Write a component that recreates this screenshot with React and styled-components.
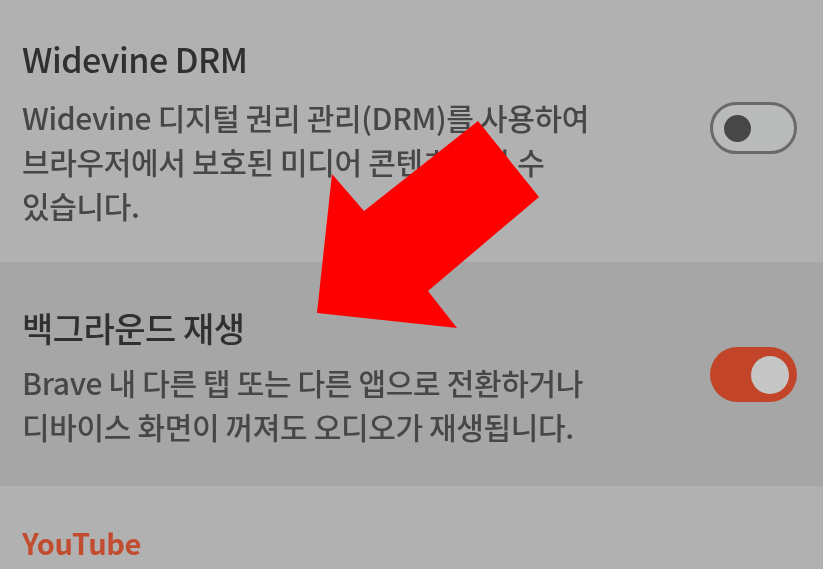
import React from "react";
import styled, { createGlobalStyle } from "styled-components";

const Global = createGlobalStyle`
  html, body { margin: 0; padding: 0; background: #b2b1b2; }
  body { font-family: "Noto Sans CJK KR", "Noto Sans", sans-serif; }
  * { box-sizing: border-box; }
`;

const Screen = styled.div`
  position: relative;
  width: 823px;
  height: 569px;
  overflow: hidden;
  background: #b2b1b2;
  filter: blur(0.6px);
`;

const SettingRow = styled.div`
  display: flex;
  align-items: flex-start;
  justify-content: space-between;
  height: ${(p) => p.$height}px;
  padding: ${(p) => p.$padTop}px 26px 0 22px;
  background: ${(p) => (p.$highlight ? "#a6a6a6" : "#b2b1b2")};
`;

const TextCol = styled.div`
  display: flex;
  flex-direction: column;
`;

const Title = styled.div`
  font-size: 34px;
  line-height: 40px;
  font-weight: 500;
  color: #303030;
  letter-spacing: -0.5px;
`;

const Desc = styled.div`
  margin-top: ${(p) => p.$gap}px;
  font-size: 30px;
  line-height: 44px;
  font-weight: 500;
  color: #474747;
  letter-spacing: -0.35px;
`;

const Track = styled.div`
  flex: none;
  width: 87px;
  height: ${(p) => (p.$on ? 55 : 52)}px;
  border-radius: 30px;
  display: flex;
  align-items: center;
  justify-content: ${(p) => (p.$on ? "flex-end" : "flex-start")};
  padding: 0 ${(p) => (p.$on ? 8 : 11)}px;
  background: ${(p) => (p.$on ? "#c2452a" : "#b8bbba")};
  border: ${(p) => (p.$on ? "none" : "3px solid #6a6a6a")};
  margin-top: ${(p) => p.$offset}px;
`;

const Knob = styled.div`
  width: ${(p) => (p.$on ? 38 : 27)}px;
  height: ${(p) => (p.$on ? 38 : 27)}px;
  border-radius: 50%;
  background: ${(p) => (p.$on ? "#c6c6c6" : "#474747")};
`;

const Category = styled.div`
  padding: 35px 22px 0;
  font-size: 29px;
  font-weight: 700;
  color: #c24c2f;
  letter-spacing: -0.4px;
`;

const ArrowLayer = styled.svg`
  position: absolute;
  left: 0;
  top: 0;
  pointer-events: none;
`;

function Toggle({ on, offset }) {
  return (
    <Track $on={on} $offset={offset}>
      <Knob $on={on} />
    </Track>
  );
}

export default function App() {
  return (
    <>
      <Global />
      <Screen>
        <SettingRow $height={262} $padTop={39}>
          <TextCol>
            <Title>Widevine DRM</Title>
            <Desc $gap={16}>
              Widevine 디지털 권리 관리(DRM)를 사용하여
              <br />
              브라우저에서 보호된 미디어 콘텐츠를 볼 수
              <br />
              있습니다.
            </Desc>
          </TextCol>
          <Toggle on={false} offset={63} />
        </SettingRow>
        <SettingRow $height={224} $padTop={46} $highlight>
          <TextCol>
            <Title>백그라운드 재생</Title>
            <Desc $gap={12}>
              Brave 내 다른 탭 또는 다른 앱으로 전환하거나
              <br />
              디바이스 화면이 꺼져도 오디오가 재생됩니다.
            </Desc>
          </TextCol>
          <Toggle on offset={39} />
        </SettingRow>
        <Category>YouTube</Category>
        <ArrowLayer width="823" height="569" viewBox="0 0 823 569">
          <polygon
            points="478,121 539,197 428,291 457,328 317,313 332,174 364,211"
            fill="#ff0000"
          />
        </ArrowLayer>
      </Screen>
    </>
  );
}
